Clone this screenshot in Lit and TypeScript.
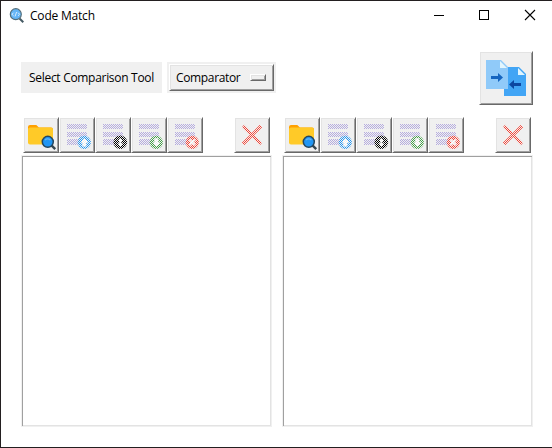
import { LitElement, html, svg, css } from "lit";
import { customElement, property } from "lit/decorators.js";

const badges: Record<string, unknown> = {
  up: svg`<circle cx="25.3" cy="25.3" r="6.6" fill="#2196f3"/><path d="M25.3 21l4 4.4h-2v4h-4v-4h-2z" fill="#fff"/>`,
  both: svg`<circle cx="25.3" cy="25.3" r="6.8" fill="#000"/><path d="M25.3 20.8l2.6 3.2h-1.6v2.6h1.6l-2.6 3.2-2.6-3.2h1.6v-2.6h-1.6z" fill="#fff"/>`,
  down: svg`<circle cx="25.3" cy="25.3" r="6.6" fill="#43a047"/><path d="M25.3 29.8l4-4.4h-2v-4.2h-4v4.2h-2z" fill="#fff"/>`,
  remove: svg`<circle cx="25.3" cy="25.3" r="6.6" fill="#f44336"/><path d="M22.6 22.6l5.4 5.4M28 22.6l-5.4 5.4" stroke="#fff" stroke-width="2"/>`,
};

@customElement("tool-button")
class ToolButton extends LitElement {
  @property() kind = "folder";

  static styles = css`
    :host { display: block; flex: none; width: 36px; height: 36px; }
    button {
      display: block; box-sizing: border-box; width: 36px; height: 36px; margin: 0; padding: 0;
      background: #f0f0f0; border: 1px solid; border-color: #fff #696969 #696969 #fff;
      box-shadow: inset 1px 1px #e3e3e3, inset -1px -1px #a0a0a0; border-radius: 0;
    }
    svg { display: block; width: 34px; height: 34px; }
  `;

  private icon() {
    if (this.kind === "folder") {
      return svg`
        <path d="M5 10q0-2 2-2h6.3l2.6 2.6H28q2 0 2 2V18H5z" fill="#ffa000"/>
        <rect x="5" y="10.6" width="25" height="17" rx="2" fill="#ffca28"/>
        <path d="M28.2 28.2l4 4" stroke="#37474f" stroke-width="2.4"/>
        <circle cx="24.8" cy="24.8" r="5.5" fill="#2196f3" stroke="#24475f" stroke-width="1.5"/>
        <path d="M22 23q2.6-2.4 5.4 0" fill="none" stroke="#64b5f6" stroke-width="1.2"/>`;
    }
    const art = this.kind === "close"
      ? svg`<path d="M9 9l18 18M27 9L9 27" stroke="#f44336" stroke-width="3.2"/>`
      : svg`<g fill="#b5acdf"><rect x="8" y="7" width="20" height="5"/><rect x="8" y="15" width="20" height="5"/><rect x="8" y="22" width="20" height="6"/></g>${badges[this.kind]}`;
    return svg`
      <defs><pattern id="stipple" width="2" height="2" patternUnits="userSpaceOnUse">
        <path d="M0 0h1v1H0zM1 1h1v1H1z" fill="#f0f0f0" shape-rendering="crispEdges"/>
      </pattern></defs>
      ${art}<rect x="3" y="3" width="30" height="30" fill="url(#stipple)"/>`;
  }

  render() {
    return html`<button aria-label=${this.kind}><svg viewBox="1 1 34 34">${this.icon()}</svg></button>`;
  }
}

@customElement("file-panel")
class FilePanel extends LitElement {
  static styles = css`
    :host { display: flex; flex-direction: column; width: 251px; }
    .tools { display: flex; padding: 0 2px; height: 38px; box-sizing: border-box; }
    .gap { flex: 1; }
    .list {
      height: 272px; box-sizing: border-box; background: #fff; border: 1px solid #f0f0f0;
      box-shadow: inset 1px 1px #a0a0a0, inset -1px -1px #e3e3e3;
    }
  `;
  render() {
    return html`
      <div class="tools">
        ${["folder", "up", "both", "down", "remove"].map((k) => html`<tool-button kind=${k}></tool-button>`)}
        <span class="gap"></span>
        <tool-button kind="close"></tool-button>
      </div>
      <div class="list"></div>`;
  }
}

@customElement("app-root")
class AppRoot extends LitElement {
  static styles = css`
    :host {
      display: block; box-sizing: border-box; width: 552px; height: 448px; overflow: hidden;
      background: #fff; border: solid #231f20; border-width: 1px 0 1px 1px;
      font: 12px/16px "Open Sans", "Noto Sans", sans-serif; color: #000;
    }
    .title { display: flex; align-items: center; height: 30px; padding: 0 1px 0 8px; }
    .logo { width: 16px; height: 16px; margin-right: 5px; }
    .name { flex: 1; letter-spacing: -0.2px; }
    .win { width: 46px; height: 30px; flex: none; }
    .head { display: flex; align-items: flex-start; padding: 20px 19px 0 20px; height: 86px; box-sizing: border-box; }
    .label {
      width: 141px; height: 31px; margin-top: 11px; background: #f0f0f0; box-sizing: border-box;
      padding-left: 8px; line-height: 31px; letter-spacing: -0.3px; white-space: nowrap;
    }
    .select { width: 109px; height: 31px; margin: 11px 0 0 5px; box-sizing: border-box; padding: 2px; background: #f0f0f0; }
    .face {
      display: flex; align-items: center; justify-content: space-between; box-sizing: border-box;
      height: 27px; padding: 0 7px 0 6px; letter-spacing: -0.35px;
      border: 1px solid; border-color: #fff #696969 #696969 #fff;
      box-shadow: inset 1px 1px #e3e3e3, inset -1px -1px #a0a0a0;
    }
    .knob {
      width: 16px; height: 7px; box-sizing: border-box; background: #f0f0f0;
      border: 1px solid; border-color: #fff #696969 #696969 #fff;
      box-shadow: inset 1px 1px #e3e3e3, inset -1px -1px #a0a0a0;
    }
    .compare {
      width: 54px; height: 54px; margin: 0 0 0 auto; padding: 0; box-sizing: border-box; background: #f0f0f0;
      border: 1px solid; border-color: #fff #696969 #696969 #fff; border-radius: 0;
      box-shadow: inset 1px 1px #e3e3e3, inset -1px -1px #a0a0a0;
    }
    .compare svg { display: block; width: 52px; height: 52px; }
    .panels { display: flex; gap: 10px; padding-left: 20px; }
  `;
  render() {
    return html`
      <div class="title">
        <svg class="logo" viewBox="0 0 16 16">
          <path d="M10.5 10.5l3.8 3.8" stroke="#455a64" stroke-width="2"/>
          <circle cx="6.8" cy="6.2" r="5.5" fill="#64b5f6" stroke="#546e7a" stroke-width="1.2"/>
          <path d="M4.6 4.7L3 6.3l1.6 1.5M9 4.7l1.6 1.6L9 7.8M7.6 4L6 8.5" stroke="#e3f2fd" stroke-width=".9" fill="none"/>
        </svg>
        <span class="name">Code Match</span>
        <svg class="win" viewBox="0 0 46 30"><path d="M21 14.5h10" stroke="#000"/></svg>
        <svg class="win" viewBox="0 0 46 30"><rect x="20.5" y="9.5" width="9" height="9" fill="none" stroke="#000"/></svg>
        <svg class="win" viewBox="0 0 46 30"><path d="M20 9l10 10M30 9l-10 10" stroke="#000" stroke-width="1.1"/></svg>
      </div>
      <div class="head">
        <div class="label">Select Comparison Tool</div>
        <div class="select"><div class="face"><span>Comparator</span><span class="knob"></span></div></div>
        <button class="compare" aria-label="Compare">
          <svg viewBox="1 1 52 52">
            <path d="M25 16h15l7 7v22H25z" fill="#42a5f5"/><path d="M39 17v7h7z" fill="#e1f5fe"/>
            <path d="M7 9h15l7 7v22H7z" fill="#90caf9"/><path d="M21 10v7h7z" fill="#e1f5fe"/>
            <path d="M12 25h7v-3l5 4.5-5 4.5v-3h-7z" fill="#1565c0"/>
            <path d="M42 32h-7v-3l-5 4.5 5 4.5v-3h7z" fill="#0d47a1"/>
          </svg>
        </button>
      </div>
      <div class="panels"><file-panel></file-panel><file-panel></file-panel></div>`;
  }
}
